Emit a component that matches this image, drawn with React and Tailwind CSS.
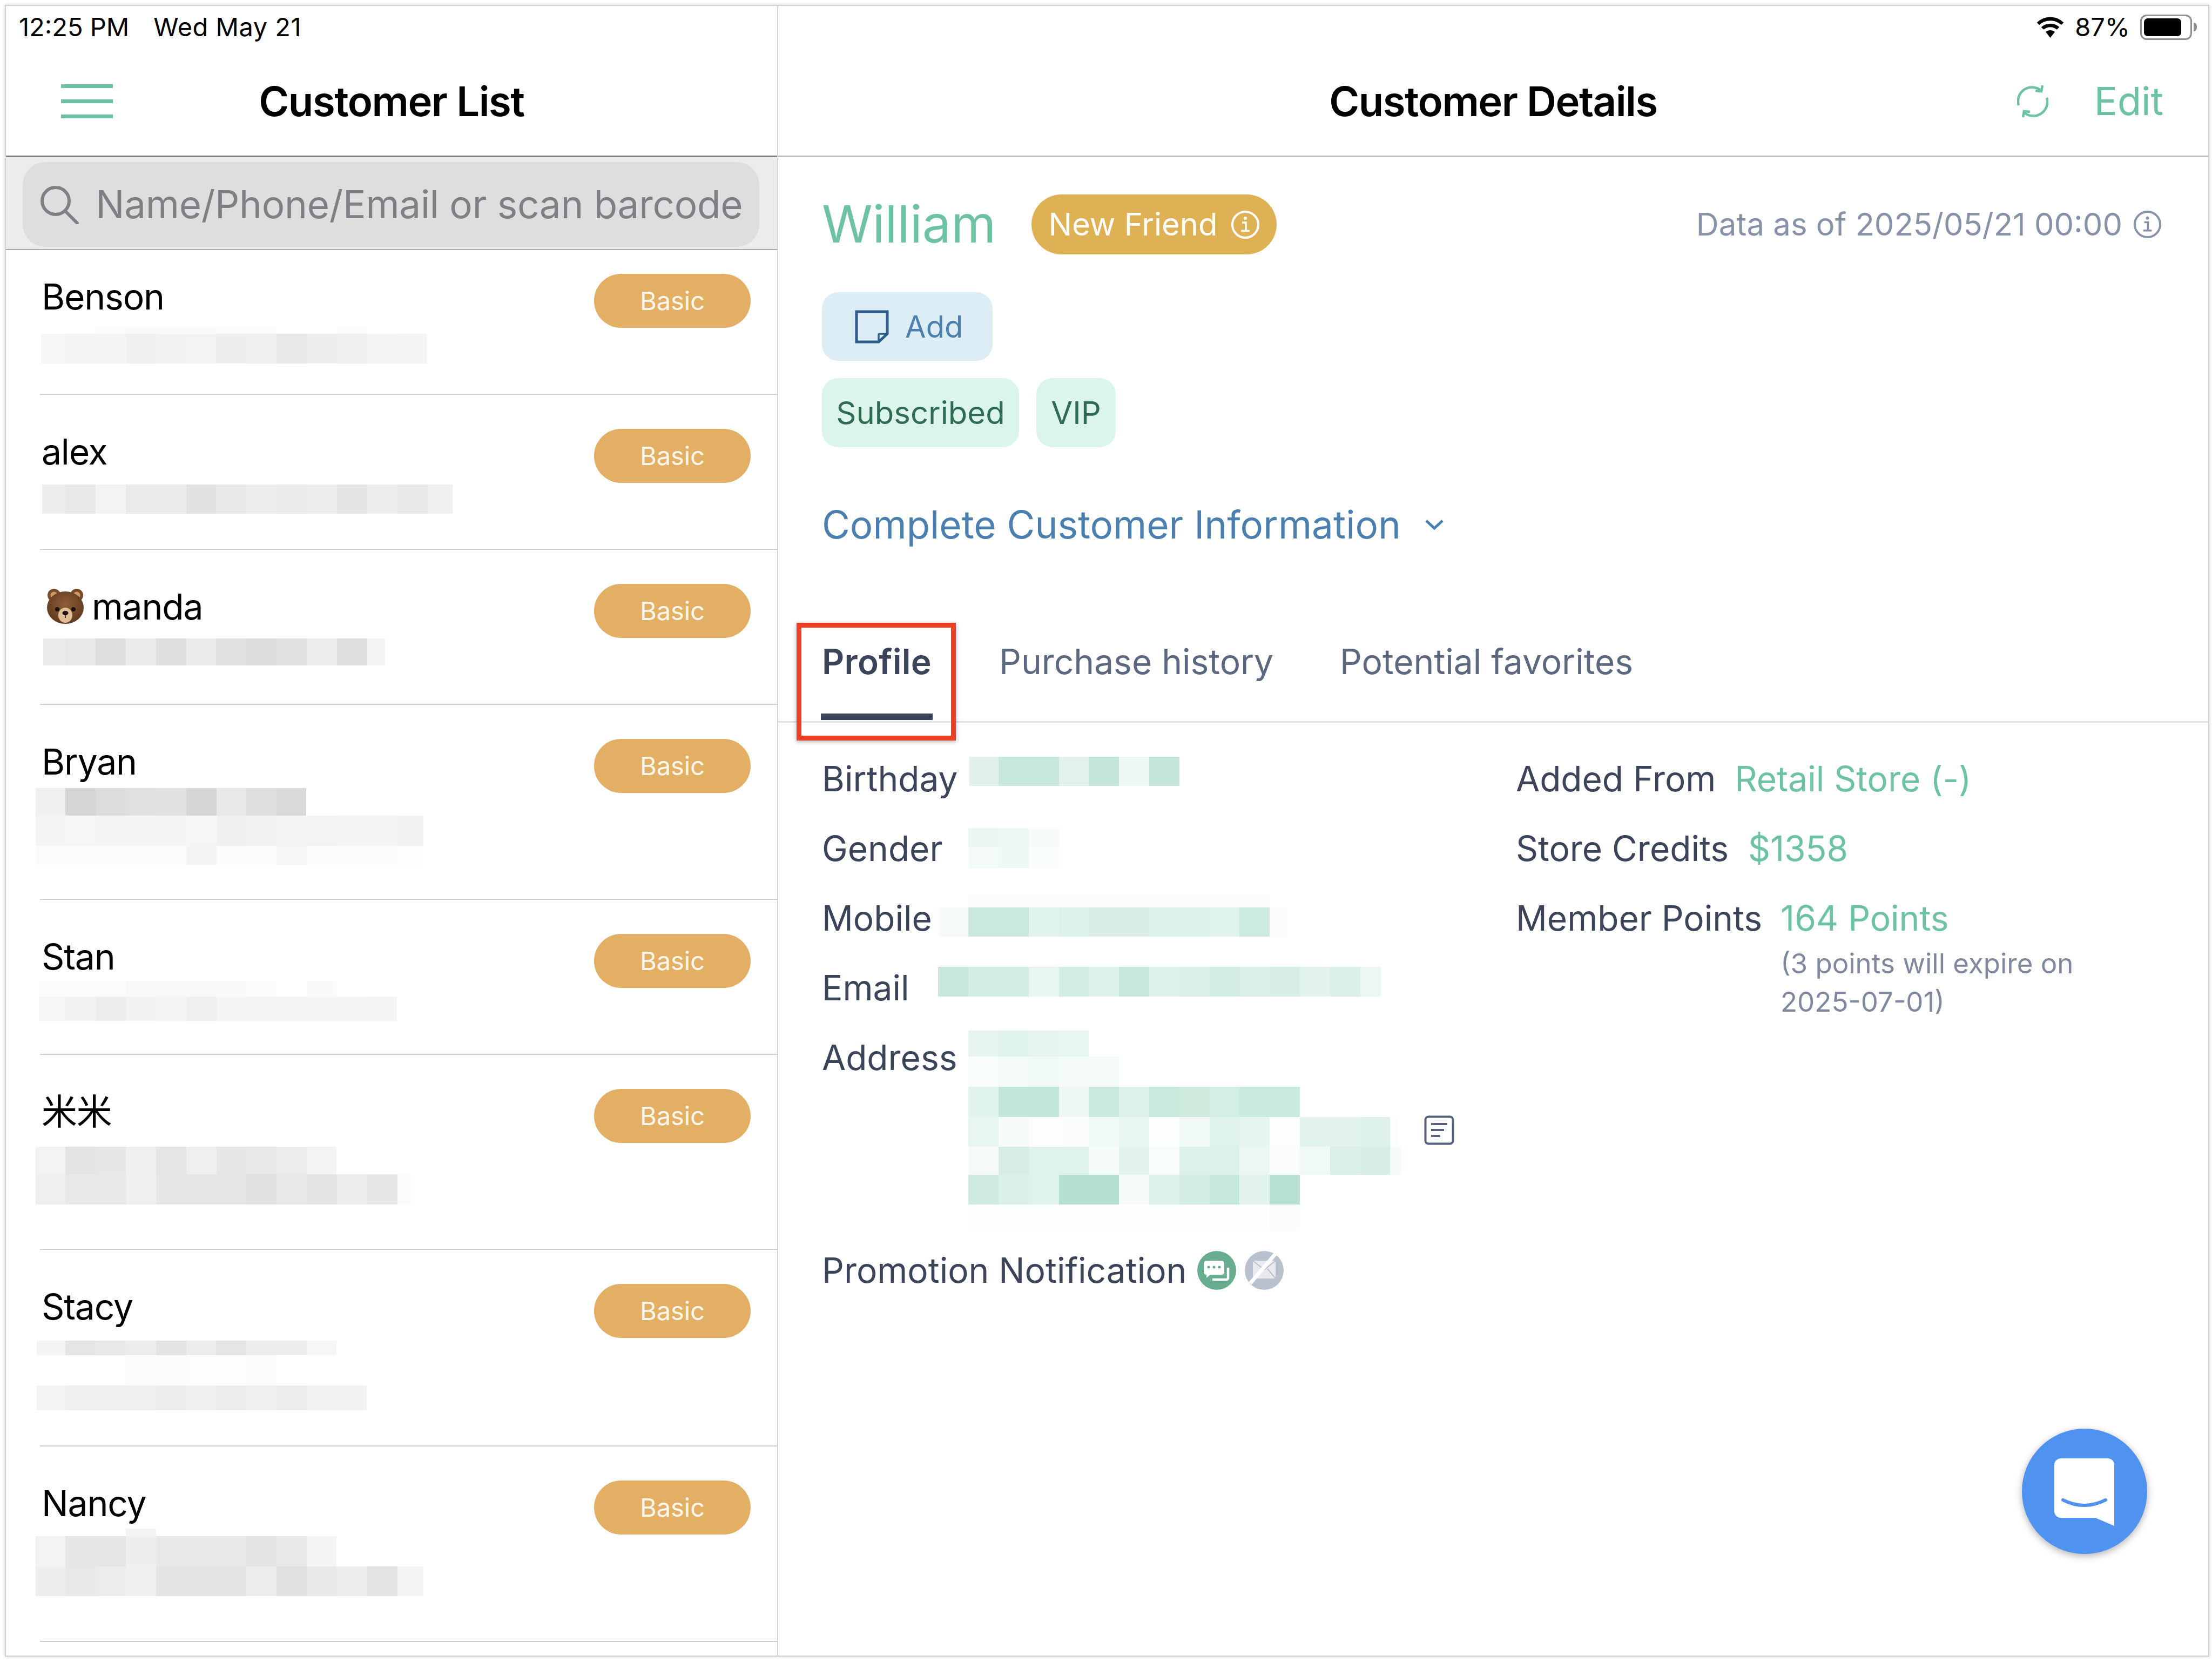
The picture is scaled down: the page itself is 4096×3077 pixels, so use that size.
import React from 'react';

// reference px -> window px
const S = 0.995;
const LIST_GRID = { start: 65, step: 56.2 };
const INFO_GRID = { start: 1746, step: 56.1 };

const gray = (list) => list.map((h) => `#${h}${h}${h}`);

const Mosaic = ({ x0, y0, grid, lines }) => {
    let cursor = y0;
    return (
        <div>
            {lines.map((line, i) => {
                const top = (line.t - cursor) * S;
                cursor = line.b;
                let from = line.l;
                const cells = line.c.map((color, j) => {
                    const k = Math.floor((from - grid.start) / grid.step + 0.01) + 1;
                    const to = Math.min(grid.start + k * grid.step, line.r);
                    const width = (to - from) * S;
                    from = to;
                    return <div key={j} className="shrink-0 h-full" style={{ width, background: color }} />;
                });
                return (
                    <div key={i} className="flex" style={{ marginLeft: (line.l - x0) * S, marginTop: top, height: (line.b - line.t) * S }}>
                        {cells}
                    </div>
                );
            })}
        </div>
    );
};

const CUSTOMERS = [
    {
        name: 'Benson', h: 'h-[268px]', pt: 'pt-[44px]', y0: 602,
        lines: [
            { l: 177.4, r: 683, t: 608, b: 621, c: gray(['fb', 'fa', 'fa', 'fa', 'fb', 'fb', 'ff', 'ff', 'fb']) },
            { l: 76, r: 794, t: 621, b: 676, c: gray(['f6', 'f4', 'f5', 'f0', 'f2', 'f3', 'ee', 'ef', 'e9', 'ee', 'ef', 'f3', 'f5']) },
        ],
    },
    {
        name: 'alex', h: 'h-[287px]', pt: 'pt-[63px]', y0: 890.5,
        lines: [{ l: 78, r: 842, t: 902, b: 956, c: gray(['ee', 'e8', 'f3', 'ea', 'eb', 'e2', 'e8', 'ed', 'eb', 'ed', 'e4', 'ee', 'e8', 'f0']) }],
    },
    {
        name: 'manda', bear: true, h: 'h-[287px]', pt: 'pt-[63px]', y0: 1178.9,
        lines: [{ l: 80, r: 716, t: 1188, b: 1238, c: gray(['eb', 'e9', 'de', 'eb', 'df', 'eb', 'e0', 'dc', 'e0', 'ee', 'df', 'f3']) }],
    },
    {
        name: 'Bryan', h: 'h-[361px]', pt: 'pt-[63px]', y0: 1467.3,
        lines: [
            { l: 66, r: 570, t: 1466, b: 1518, c: gray(['f0', 'd5', 'dc', 'e0', 'e2', 'd6', 'e9', 'df', 'd9']) },
            { l: 66, r: 788, t: 1518, b: 1574, c: gray(['f4', 'f6', 'f4', 'f4', 'f4', 'f6', 'f0', 'f2', 'f3', 'f3', 'f5', 'f4', 'f2']) },
            { l: 66, r: 788, t: 1574, b: 1609, c: gray(['fb', 'fb', 'fb', 'fb', 'fb', 'f5', 'fb', 'fb', 'f6', 'fc', 'fb', 'fb', 'fd']) },
        ],
    },
    {
        name: 'Stan', h: 'h-[287px]', pt: 'pt-[63px]', y0: 1830.2,
        lines: [
            { l: 72, r: 626, t: 1825, b: 1854, c: gray(['fc', 'fb', 'fb', 'f8', 'f9', 'f9', 'fa', 'fb', 'ff', 'fa']) },
            { l: 72, r: 738, t: 1854, b: 1900, c: gray(['f6', 'f2', 'ed', 'f2', 'f4', 'ef', 'f5', 'f4', 'f4', 'f5', 'f5', 'f4']) },
        ],
    },
    {
        name: '米米', h: 'h-[361px]', pt: 'pt-[63px]', y0: 2118.6,
        lines: [
            { l: 66, r: 626, t: 2134, b: 2185, c: gray(['f3', 'e3', 'e6', 'ef', 'e5', 'ef', 'e6', 'e8', 'ec', 'f3']) },
            { l: 66, r: 765, t: 2185, b: 2241, c: gray(['ef', 'e8', 'e8', 'ef', 'e6', 'e6', 'e6', 'e1', 'e9', 'e4', 'ee', 'e7', 'fb']) },
        ],
    },
    {
        name: 'Stacy', h: 'h-[364px]', pt: 'pt-[63px]', y0: 2481.4,
        lines: [
            { l: 68, r: 626, t: 2494, b: 2522, c: gray(['f5', 'e5', 'e9', 'ec', 'e4', 'ec', 'e5', 'ec', 'ec', 'f6']) },
            { l: 234, r: 514, t: 2522, b: 2578, c: gray(['fc', 'fb', 'fd', 'fe', 'fb']) },
            { l: 68, r: 682, t: 2578, b: 2624, c: gray(['f3', 'ef', 'ef', 'ef', 'ec', 'f0', 'ec', 'f0', 'ec', 'f2', 'f2']) },
        ],
    },
    {
        name: 'Nancy', h: 'h-[362px]', pt: 'pt-[63px]', y0: 2847,
        lines: [
            { l: 234, r: 289.8, t: 2844, b: 2858, c: gray(['f3']) },
            { l: 66, r: 626, t: 2858, b: 2914, c: gray(['f3', 'e6', 'e6', 'ee', 'e8', 'e8', 'e8', 'e3', 'e8', 'f4']) },
            { l: 66, r: 788, t: 2914, b: 2970, c: gray(['ee', 'e8', 'ec', 'f0', 'e4', 'e4', 'e4', 'ec', 'e0', 'e8', 'ee', 'e3', 'f4']) },
        ],
    },
];

const BIRTHDAY = [{ l: 1804, r: 2194.8, t: 1408, b: 1462, c: ['#e0f1eb', '#c8e8dc', '#c8e8dc', '#e0f2eb', '#c4e7da', '#eff8f4', '#c4e7da'] }];
const GENDER = [
    { l: 1802.1, r: 1970.4, t: 1540, b: 1574, c: ['#e9f6f1', '#edf7f3', '#f7fbf9'] },
    { l: 1802.1, r: 1970.4, t: 1574, b: 1614, c: ['#f3faf7', '#f0f8f5', '#f8fcfa'] },
];
const MOBILE = [
    { l: 1802.1, r: 2363, t: 1664, b: 1687, c: Array(10).fill('#fbfdfc') },
    { l: 1748, r: 2396, t: 1687, b: 1742, c: ['#f3faf7', '#c8e9dc', '#c8e9dc', '#e0f3ec', '#dcf1e9', '#d9efe6', '#d9efe6', '#dcf1e9', '#dcf1e9', '#e0f3ec', '#cdeadf', '#fbfdfc'] },
];
const EMAIL = [{ l: 1746, r: 2570, t: 1799, b: 1854, c: ['#c5e8da', '#d3ede3', '#d3ede3', '#e8f6f1', '#d3ede3', '#dcf1e9', '#c5e8da', '#dcf1e9', '#d9efe7', '#d3ede3', '#d9efe7', '#d6eee5', '#e2f3ed', '#d9efe7', '#eaf7f2'] }];
const ADDRESS = [
    { l: 1802.1, r: 2026.5, t: 1918, b: 1966, c: ['#e6f5ef', '#dff2eb', '#e6f5ef', '#e8f6f1'] },
    { l: 1802.1, r: 2082.6, t: 1966, b: 2022, c: ['#f8fcfa', '#f4fbf8', '#f0f9f5', '#f4fbf8', '#f4fbf8'] },
    { l: 1802.1, r: 2419.2, t: 2022, b: 2078, c: ['#e0f3ec', '#c3e8d9', '#c3e8d9', '#edf8f3', '#c8e9dc', '#dcf1e9', '#c8e9dc', '#d0ecdf', '#d3eee3', '#c9eadd', '#c9eadd'] },
    { l: 1802.1, r: 2600, t: 2078, b: 2134, c: ['#e8f6f1', '#f7fcfa', '#fcfefd', '#fafdfb', '#f0f9f5', '#e8f6f1', '#fcfefd', '#f0f9f5', '#dff2eb', '#e6f5ef', '#fcfefd', '#e3f3ee', '#e3f3ee', '#ddf1ea', '#fcfefd'] },
    { l: 1802.1, r: 2608, t: 2134, b: 2186, c: ['#f6fbf9', '#d6eee5', '#dff2eb', '#dff2eb', '#f4fbf8', '#e3f4ee', '#f8fcfa', '#dcf1e9', '#dcf1e9', '#ecf7f3', '#fbfdfc', '#f0f9f5', '#d9efe7', '#d6eee5', '#f4fbf8'] },
    { l: 1802.1, r: 2419.2, t: 2186, b: 2241, c: ['#cfebe0', '#d9efe7', '#dff2eb', '#b3e0cf', '#b3e0cf', '#f6fbf9', '#dcf1e9', '#d3ede3', '#c6e8db', '#e3f4ee', '#b7e2d2'] },
    { l: 1802.1, r: 2419.2, t: 2241, b: 2289, c: ['#fdfefe', '#fcfefd', '#fcfefd', '#fcfefd', '#fcfefd', '#fdfefe', '#fcfefd', '#fefefe', '#fefefe', '#fefefe', '#fafdfc'] },
];

const InfoIcon = ({ className, color }) => (
    <svg viewBox="0 0 54 54" className={className} fill="none" stroke={color} strokeWidth="4">
        <circle cx="27" cy="27" r="24" />
        <path d="M21 23h7v15M19 38.5h16" strokeWidth="3.5" />
        <circle cx="27" cy="15" r="3" fill={color} stroke="none" />
    </svg>
);

const BearIcon = () => (
    <svg viewBox="0 0 72 68" className="w-[72px] h-[68px] ml-[8px] mr-[13px] shrink-0">
        <defs>
            <radialGradient id="bearFace" cx="50%" cy="40%" r="60%">
                <stop offset="0%" stopColor="#8f5d36" />
                <stop offset="100%" stopColor="#5f3a20" />
            </radialGradient>
        </defs>
        <circle cx="15" cy="13" r="12" fill="#7b4c2a" />
        <circle cx="57" cy="13" r="12" fill="#7b4c2a" />
        <circle cx="15" cy="13" r="6.5" fill="#c99a6e" />
        <circle cx="57" cy="13" r="6.5" fill="#c99a6e" />
        <ellipse cx="36" cy="36" rx="34" ry="30" fill="url(#bearFace)" />
        <ellipse cx="36" cy="50" rx="13" ry="14" fill="#e0bd94" />
        <ellipse cx="36" cy="46" rx="5.5" ry="4" fill="#1f1410" />
        <path d="M36 49v6" stroke="#1f1410" strokeWidth="1.5" />
        <circle cx="21" cy="39" r="4" fill="#1a100c" />
        <circle cx="51" cy="39" r="4" fill="#1a100c" />
    </svg>
);

const CustomerRow = ({ customer }) => (
    <div className={`${customer.h} ${customer.pt} ml-[63px] pr-[49px] flex justify-between items-start shrink-0 border-b-2 border-[#cfcfcf]`}>
        <div className="flex flex-col">
            <div className="ml-[3px] -mt-[8px] h-[100px] leading-[100px] text-[66px] tracking-[-1.2px] text-black flex items-center whitespace-nowrap">
                {customer.bear && <BearIcon />}
                {customer.name}
            </div>
            <Mosaic
                x0={74}
                y0={customer.y0}
                grid={LIST_GRID}
                lines={customer.lines}
            />
        </div>
        <div className="w-[290px] h-[100px] shrink-0 rounded-full bg-[#e2af65] text-[#fdf6ea] text-[47px] flex items-center justify-center">
            Basic
        </div>
    </div>
);

const Label = ({ children, className = '' }) => (
    <div className={`h-[129px] leading-[129px] text-[64px] text-[#3c4459] whitespace-nowrap ${className}`}>{children}</div>
);

const ValueRow = ({ label, value, gap }) => (
    <div className={`flex h-[129px] text-[64px] leading-[129px] whitespace-nowrap ${gap}`}>
        <span className="text-[#3c4459]">{label}</span>
        <span className="text-[#6cc2a1]">{value}</span>
    </div>
);

const MosaicRow = ({ label, y0, lines }) => (
    <div className="flex h-[129px]">
        <Label className="w-[210px] shrink-0">{label}</Label>
        <Mosaic x0={1740.7} y0={y0} grid={INFO_GRID} lines={lines} />
    </div>
);

const StatusLeft = () => (
    <div className="h-[78px] pl-[24px] flex items-center gap-[45px] text-[47px] text-black whitespace-nowrap">
        <span>12:25 PM</span>
        <span className="tracking-[0.5px]">Wed May 21</span>
    </div>
);

const StatusRight = () => (
    <div className="h-[78px] pr-[21px] flex items-center justify-end text-[47px] text-black">
        <svg viewBox="0 0 55 39" className="w-[55px] h-[39px] mr-[18px]" fill="none" stroke="#000" strokeWidth="6.5">
            <path d="M5 13 C17 1, 38 1, 50 13" />
            <path d="M13 21.5 C21 14, 34 14, 42 21.5" />
            <path d="M27.5 39 L19 28 C24 24, 31 24, 36 28 Z" fill="#000" stroke="none" />
        </svg>
        <span>87%</span>
        <div className="ml-[19px] w-[96px] h-[47px] rounded-[12px] border-[3px] border-[#8f8f8f] p-[4px]">
            <div className="w-[84%] h-full rounded-[7px] bg-black" />
        </div>
        <div className="ml-[3px] w-[6px] h-[16px] rounded-r-full bg-[#8f8f8f]" />
    </div>
);

export default function App() {
    return (
        <div className="w-[4096px] h-[3077px] bg-white overflow-hidden pt-[9px] pl-[9px] font-['Inter','Noto_Sans_CJK_SC',sans-serif]">
            <div className="w-[4082px] h-[3058px] border-2 border-[#d2d2d2] shadow-[0_0_6px_rgba(0,0,0,0.18)] flex overflow-hidden">
                {/* left column */}
                <div className="w-[1430px] h-full shrink-0 border-r-2 border-[#d4d4d4] flex flex-col overflow-hidden">
                    <StatusLeft />
                    <div className="h-[202px] shrink-0 border-b-[3px] border-[#808080] pb-[3px] grid grid-cols-[1fr_auto_1fr] items-center">
                        <div className="ml-[102px] w-[96px] flex flex-col gap-[21px]">
                            <div className="h-[7px] bg-[#6cc2a1]" />
                            <div className="h-[7px] bg-[#6cc2a1]" />
                            <div className="h-[7px] bg-[#6cc2a1]" />
                        </div>
                        <div className="text-[76px] font-semibold tracking-[-1.5px] text-black whitespace-nowrap">Customer List</div>
                    </div>
                    <div className="h-[172px] shrink-0 bg-[#ececec] border-b-2 border-[#a9a9a9] pt-[9px] pl-[31px]">
                        <div className="w-[1364px] h-[157px] rounded-[42px] bg-[#dedede] flex items-center pl-[32px] whitespace-nowrap">
                            <svg viewBox="0 0 72 72" className="w-[72px] h-[72px] mr-[31px] shrink-0" fill="none" stroke="#7f7f85" strokeWidth="6">
                                <circle cx="29" cy="29" r="25" />
                                <path d="M47 48l22 22" strokeLinecap="round" />
                            </svg>
                            <span className="text-[71px] tracking-[-0.3px] text-[#7f7f85]">Name/Phone/Email or scan barcode</span>
                        </div>
                    </div>
                    {CUSTOMERS.map((c, i) => (
                        <CustomerRow key={i} customer={c} />
                    ))}
                </div>

                {/* right column */}
                <div className="flex-1 h-full relative flex flex-col">
                    <StatusRight />
                    <div className="h-[202px] shrink-0 border-b-[3px] border-[#bbbbbb] pb-[3px] grid grid-cols-[1fr_auto_1fr] items-center">
                        <div />
                        <div className="text-[76px] font-semibold tracking-[-1.5px] text-black whitespace-nowrap">Customer Details</div>
                        <div className="flex items-center justify-end gap-[85px] pr-[83px]">
                            <svg viewBox="0 0 58 61" className="w-[58px] h-[61px]" fill="none" stroke="#6cc2a1" strokeWidth="4.5">
                                <path d="M3 38A26 26 0 0 1 44 10" />
                                <path d="M47 1L45 12L34 11" />
                                <path d="M55 24A26 26 0 0 1 14 52" />
                                <path d="M11 60L13 49L24 50" />
                            </svg>
                            <span className="text-[72px] text-[#6cc2a1]">Edit</span>
                        </div>
                    </div>

                    <div className="pl-[81px] pr-[86px] pt-[69px] flex flex-col items-start">
                        <div className="w-full h-[111px] flex items-center whitespace-nowrap">
                            <span className="w-[388px] shrink-0 text-[95px] text-[#6cc2a1]">William</span>
                            <div className="w-[454px] h-[111px] rounded-full bg-[#dfb155] text-white text-[58px] flex items-center justify-center gap-[24px]">
                                <span>New Friend</span>
                                <InfoIcon className="w-[54px] h-[54px]" color="#ffffff" />
                            </div>
                            <div className="ml-auto flex items-center gap-[20px] text-[58px] text-[#8791a8]">
                                <span>Data as of 2025/05/21 00:00</span>
                                <InfoIcon className="w-[53px] h-[53px]" color="#8791a8" />
                            </div>
                        </div>

                        <div className="mt-[70px] w-[316px] h-[127px] rounded-[30px] bg-[#dcedf5] flex items-center pl-[61px] gap-[30px]">
                            <svg viewBox="0 0 63 62" className="w-[63px] h-[62px]" fill="none" stroke="#2e5b8c" strokeWidth="5">
                                <path d="M3 3H60V44L44 59H3Z" />
                                <path d="M60 44H46Q44 44 44 46V59" strokeWidth="3.5" />
                            </svg>
                            <span className="text-[56px] text-[#4a7fb0]">Add</span>
                        </div>

                        <div className="mt-[32px] flex gap-[32px] text-[58px] text-[#2f6b52]">
                            <div className="w-[365px] h-[128px] rounded-[30px] bg-[#dcf5ea] flex items-center justify-center">Subscribed</div>
                            <div className="w-[147px] h-[128px] rounded-[30px] bg-[#dcf5ea] flex items-center justify-center">VIP</div>
                        </div>

                        <div className="mt-[93px] h-[100px] flex items-center text-[71px] text-[#4a7fb0] whitespace-nowrap">
                            <span>Complete Customer Information</span>
                            <svg viewBox="0 0 36 20" className="ml-[44px] w-[36px] h-[20px]" fill="none" stroke="#4a7fb0" strokeWidth="5">
                                <path d="M3 3l15 14L33 3" />
                            </svg>
                        </div>
                    </div>

                    {/* tabs */}
                    <div className="relative mt-[104px] h-[213px] shrink-0 border-b-[3px] border-[#dde3ea] pl-[79px] flex gap-[123px] text-[64px] whitespace-nowrap">
                        <div className="w-[207px] flex flex-col items-center pt-[50px]">
                            <div className="h-[100px] leading-[100px] font-semibold tracking-[0.3px] text-[#3c4459]">Profile</div>
                            <div className="mt-[46px] w-full h-[12px] bg-[#3c4459]" />
                        </div>
                        <div className="pt-[50px] leading-[100px] text-[#5c6780]">Purchase history</div>
                        <div className="pt-[50px] leading-[100px] text-[#5c6780]">Potential favorites</div>
                        <div className="absolute left-[34px] top-[28px] w-[295px] h-[218px] border-[9px] border-[#ee4025] shadow-[0_2px_8px_rgba(0,0,0,0.3)]" />
                    </div>

                    {/* profile details */}
                    <div className="pl-[81px] pt-[39px] flex">
                        <div className="w-[1285px] shrink-0">
                            <MosaicRow label="Birthday" y0={1384} lines={BIRTHDAY} />
                            <MosaicRow label="Gender" y0={1512.6} lines={GENDER} />
                            <MosaicRow label="Mobile" y0={1642} lines={MOBILE} />
                            <MosaicRow label="Email" y0={1772.9} lines={EMAIL} />
                            <div className="flex h-[409px]">
                                <Label className="w-[210px] shrink-0">Address</Label>
                                <div className="w-[905px] shrink-0">
                                    <Mosaic x0={1740.7} y0={1902.5} grid={INFO_GRID} lines={ADDRESS} />
                                </div>
                                <svg viewBox="0 0 56 55" className="mt-[172px] w-[56px] h-[55px] shrink-0" fill="none" stroke="#55607a" strokeWidth="4">
                                    <rect x="2.5" y="2.5" width="51" height="50" rx="6" />
                                    <path d="M13 16h30M13 27h24M13 38h17" />
                                </svg>
                            </div>
                            <div className="h-[100px] flex items-center text-[64px] text-[#3c4459] whitespace-nowrap">
                                <span>Promotion Notification</span>
                                <svg viewBox="0 0 72 72" className="ml-[20px] w-[72px] h-[72px] shrink-0">
                                    <circle cx="36" cy="36" r="36" fill="#69ad8f" />
                                    <path d="M17 18h28a5 5 0 0 1 5 5v16a5 5 0 0 1-5 5H24l-7 6v-6a5 5 0 0 1-5-5V23a5 5 0 0 1 5-5z" fill="#fff" />
                                    <circle cx="21" cy="30" r="2.5" fill="#69ad8f" />
                                    <circle cx="31" cy="30" r="2.5" fill="#69ad8f" />
                                    <circle cx="41" cy="30" r="2.5" fill="#69ad8f" />
                                    <path d="M57 31v19a3 3 0 0 1-3 3H28" fill="none" stroke="#fff" strokeWidth="4.5" />
                                </svg>
                                <svg viewBox="0 0 72 72" className="ml-[16px] w-[72px] h-[72px] shrink-0">
                                    <circle cx="36" cy="36" r="36" fill="#b9c0ce" />
                                    <rect x="15" y="18" width="42" height="33" fill="#e8eaf0" />
                                    <path d="M15 18l21 17 21-17M15 51l15-18M57 51L42 33" fill="none" stroke="#b9c0ce" strokeWidth="2" />
                                    <path d="M58 4L10 60" stroke="#fff" strokeWidth="7" />
                                </svg>
                            </div>
                        </div>

                        <div className="flex-1">
                            <ValueRow label="Added From" value="Retail Store (-)" gap="gap-[35px]" />
                            <ValueRow label="Store Credits" value="$1358" gap="gap-[36px]" />
                            <ValueRow label="Member Points" value="164 Points" gap="gap-[34px]" />
                            <div className="-mt-[16px] ml-[490px] text-[51px] leading-[71px] text-[#7f889e] whitespace-nowrap">
                                <div>(3 points will expire on</div>
                                <div>2025-07-01)</div>
                            </div>
                        </div>
                    </div>

                    {/* chat launcher */}
                    <div className="absolute right-[113px] bottom-[188px] w-[232px] h-[232px] rounded-full bg-[#5092f0] shadow-[0_4px_14px_rgba(0,0,0,0.3)]">
                        <svg viewBox="0 0 232 232" className="w-full h-full">
                            <path d="M72 55H159a12 12 0 0 1 12 12V180L136 165H72a12 12 0 0 1-12-12V67a12 12 0 0 1 12-12Z" fill="#fff" />
                            <path d="M76 132Q115 152 155 132" fill="none" stroke="#5092f0" strokeWidth="6" strokeLinecap="round" />
                        </svg>
                    </div>
                </div>
            </div>
        </div>
    );
}
